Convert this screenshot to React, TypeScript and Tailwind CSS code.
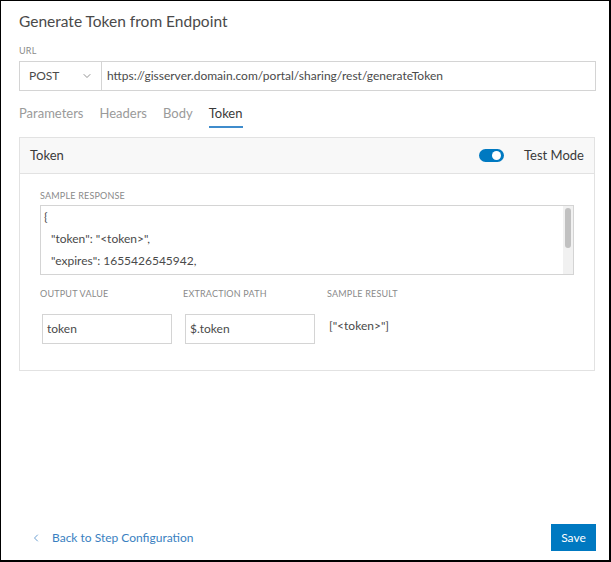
import { ChevronDown, ChevronLeft } from 'lucide-react';

const font = { fontFamily: 'Lato, "Noto Sans", sans-serif' };

function FieldLabel({ children }: { children: string }) {
  return <div className="text-[9px] uppercase tracking-[0.2px] text-[#8a8a8a]">{children}</div>;
}

function App() {
  return (
    <div
      style={font}
      className="flex h-[562px] w-[611px] flex-col border-t border-l border-r-2 border-b-2 border-black bg-white text-[#4a4a4a]"
    >
      <div className="flex flex-1 flex-col px-[18px]">
        {/* Title */}
        <h1 className="mt-[10px] text-[15.5px] leading-[20px] text-[#4a4a4a]">Generate Token from Endpoint</h1>

        {/* URL */}
        <div className="mt-[13px]">
          <FieldLabel>URL</FieldLabel>
        </div>
        <div className="mt-[3px] flex h-[30px] w-[577px]">
          <div className="flex w-[83px] items-center justify-between border border-[#d4d4d4] pl-[9px] pr-[8px] text-[12px]">
            <span>POST</span>
            <ChevronDown className="h-3 w-3 text-[#6e6e6e]" strokeWidth={1.5} />
          </div>
          <div className="flex flex-1 items-center border border-l-0 border-[#d4d4d4] pl-[5px] text-[12px]">
            https://gisserver.domain.com/portal/sharing/rest/generateToken
          </div>
        </div>

        {/* Tabs */}
        <div className="mt-[13px] flex gap-[16px] text-[13px]">
          <span className="text-[#9a9a9a]">Parameters</span>
          <span className="text-[#9a9a9a]">Headers</span>
          <span className="text-[#9a9a9a]">Body</span>
          <span className="border-b-2 border-[#3f8ccc] pb-[3px] text-[#3a3a3a]">Token</span>
        </div>

        {/* Token card */}
        <div className="mt-[9px] w-[576px] border border-[#e2e2e2]">
          <div className="flex h-[36px] items-center justify-between border-b border-[#e2e2e2] bg-[#f8f8f8] pl-[10px] pr-[10px] text-[13px]">
            <span className="text-[#3a3a3a]">Token</span>
            <div className="flex items-center gap-[20px]">
              <div className="relative ml-[2px] h-[13px] w-[25px] rounded-full bg-[#0079c1]">
                <div className="absolute right-[3px] top-[2px] h-[9px] w-[9px] rounded-full bg-white" />
              </div>
              <span className="text-[#3a3a3a]">Test Mode</span>
            </div>
          </div>

          <div className="px-[20px] pt-[15px] pb-[26px]">
            <FieldLabel>Sample Response</FieldLabel>
            <div className="relative mt-[2px] h-[70px] w-[534px] overflow-hidden border border-[#d4d4d4] pl-[3px] pt-[-2px] text-[12px] leading-[22px] text-[#4a4a4a]">
              <div>{'{'}</div>
              <div className="pl-[7px]">"token": "&lt;token&gt;",</div>
              <div className="pl-[7px]">"expires": 1655426545942,</div>
              <div className="absolute right-0 top-0 h-full w-[10px] bg-[#f1f1f1]">
                <div className="mx-auto mt-[2px] h-[40px] w-[6px] rounded-full bg-[#c1c1c1]" />
              </div>
            </div>

            <div className="mt-[12px] flex">
              <div className="w-[143px]">
                <FieldLabel>Output Value</FieldLabel>
                <div className="mt-[14px] ml-[2px] flex h-[30px] w-[130px] items-center border border-[#d4d4d4] pl-[4px] text-[12px]">
                  token
                </div>
              </div>
              <div className="w-[144px]">
                <FieldLabel>Extraction Path</FieldLabel>
                <div className="mt-[14px] ml-[2px] flex h-[30px] w-[130px] items-center border border-[#d4d4d4] pl-[4px] text-[12px]">
                  $.token
                </div>
              </div>
              <div>
                <FieldLabel>Sample Result</FieldLabel>
                <div className="mt-[17px] ml-[2px] text-[12px]">["&lt;token&gt;"]</div>
              </div>
            </div>
          </div>
        </div>

        <div className="flex-1" />

        {/* Footer */}
        <div className="mb-[9px] flex w-[577px] items-center justify-between">
          <div className="flex items-center gap-[10px] pl-[11px] text-[12px] text-[#3a7fc1]">
            <ChevronLeft className="h-3 w-3" strokeWidth={1.5} />
            <span>Back to Step Configuration</span>
          </div>
          <button className="h-[27px] w-[45px] bg-[#0079c1] text-[12px] text-white">Save</button>
        </div>
      </div>
    </div>
  );
}

export default App;
